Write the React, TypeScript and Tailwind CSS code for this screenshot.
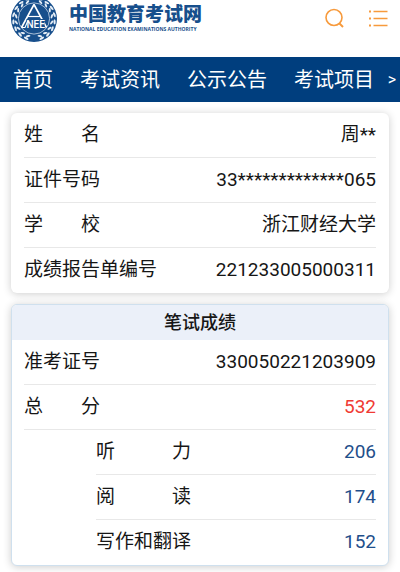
import clsx from "clsx";

type Row = {
  label: string;
  value: string;
  tone?: "red" | "blue";
  nested?: boolean;
};

const navItems = ["首页", "考试资讯", "公示公告", "考试项目"];

const profileRows: Row[] = [
  { label: "姓　　名", value: "周**" },
  { label: "证件号码", value: "33*************065" },
  { label: "学　　校", value: "浙江财经大学" },
  { label: "成绩报告单编号", value: "221233005000311" },
];

const scoreRows: Row[] = [
  { label: "准考证号", value: "330050221203909" },
  { label: "总　　分", value: "532", tone: "red" },
  { label: "听　　　力", value: "206", tone: "blue", nested: true },
  { label: "阅　　　读", value: "174", tone: "blue", nested: true },
  { label: "写作和翻译", value: "152", tone: "blue", nested: true },
];

// angles of the laurel leaves, one side; the other side is mirrored
const leafAngles = [18, 38, 58, 78, 98, 118, 138, 158];

function Emblem() {
  return (
    <svg viewBox="0 4 46 42" className="h-[42px] w-[46px] shrink-0" role="img" aria-label="NEEA">
      <circle cx="23" cy="23" r="23" fill="#174f8c" />
      {[1, -1].map((side) => (
        <g key={side} transform={`translate(23 23) scale(${side} 1)`} fill="#e6eef6">
          {leafAngles.map((angle) => (
            <g key={angle} transform={`rotate(${angle})`}>
              <ellipse cx="0" cy="-20.8" rx="2.6" ry="1.1" transform="rotate(-10 0 -20.8)" />
              <ellipse cx="1" cy="-18" rx="2.3" ry="1" transform="rotate(30 1 -18)" />
            </g>
          ))}
        </g>
      ))}
      <circle cx="23" cy="22.5" r="15.6" fill="#174f8c" stroke="#e6eef6" strokeWidth="0.7" />
      <path d="M23 8.5 10.5 31.5M23 8.5l12.5 23" fill="none" stroke="#fff" strokeWidth="1.6" />
      <path d="M17 20.5h12" stroke="#fff" strokeWidth="1.2" />
      <path d="M15.5 23h18v9.5h-18Z" fill="#174f8c" />
      <path d="M10.5 31.5h3.5l3-7" fill="none" stroke="#fff" strokeWidth="1.1" />
      <text x="15.5" y="31.5" fill="#fff" fontSize="10" fontWeight="500" fontFamily="Roboto, sans-serif">
        NEE
      </text>
    </svg>
  );
}

function Header() {
  return (
    <header className="flex h-[57px] items-start justify-between pr-3 pl-[11px]">
      <a href="#" className="flex items-start gap-3 text-[#174f8c]">
        <Emblem />
        <span className="flex flex-col pt-1">
          <span className="text-[19px] leading-[22px] font-black whitespace-nowrap">中国教育考试网</span>
          <span className="font-['Open_Sans',sans-serif] text-[5px] leading-[7px] font-bold whitespace-nowrap">
            NATIONAL EDUCATION EXAMINATIONS AUTHORITY
          </span>
        </span>
      </a>
      <div className="flex gap-6 pt-2 text-[#f79a3c]">
        <button type="button" aria-label="搜索">
          <svg viewBox="0 0 20 20" className="size-5" fill="none" stroke="currentColor" strokeWidth="1.6">
            <circle cx="10" cy="9.5" r="8" />
            <path d="m15.5 15.5 3.5 3.5" strokeWidth="2" />
          </svg>
        </button>
        <button type="button" aria-label="菜单">
          <svg viewBox="0 0 20 20" className="size-5" fill="none" stroke="currentColor" strokeWidth="1.5">
            <path d="M5.5 3.5h14M5.5 10.5h14M5.5 17.5h14" />
            <path d="M1 3.5h2M1 10.5h2M1 17.5h2" strokeWidth="2" />
          </svg>
        </button>
      </div>
    </header>
  );
}

function InfoRow({ label, value, tone, nested }: Row) {
  return (
    <div
      className={clsx(
        "flex h-[45px] items-center justify-between border-b border-[#e8e8e8] last:border-b-0",
        nested && "ml-[72px]"
      )}
    >
      <dt>{label}</dt>
      <dd className={clsx(tone === "red" && "text-[#f03a34]", tone === "blue" && "text-[#1f4f8b]")}>
        {value}
      </dd>
    </div>
  );
}

export default function App() {
  return (
    <div className="overflow-hidden bg-white pb-2 font-[Roboto,'Noto_Sans_CJK_SC',sans-serif] text-[19px] text-[#161616]">
      <Header />

      <nav className="flex h-[45px] items-center justify-between bg-[#003e7e] pr-1 pl-[13px] text-[20px] text-white">
        <div className="flex gap-[27px]">
          {navItems.map((item) => (
            <a key={item} href="#" className="whitespace-nowrap">
              {item}
            </a>
          ))}
        </div>
        <button type="button" aria-label="更多" className="text-base leading-5">
          &gt;
        </button>
      </nav>

      <main className="flex flex-col gap-[11px] px-[11px] pt-[11px]">
        <section className="rounded-md bg-white px-[13px] shadow-[0_1px_8px_rgba(0,0,0,0.2)]">
          <dl>
            {profileRows.map((row) => (
              <InfoRow key={row.label} {...row} />
            ))}
          </dl>
        </section>

        <section className="overflow-hidden rounded-md border border-[#cfe0ee] bg-white shadow-[0_1px_8px_rgba(0,0,0,0.2)]">
          <h2 className="bg-[#ebf0f9] text-center text-[18px] leading-[35px] font-medium">笔试成绩</h2>
          <dl className="px-3">
            {scoreRows.map((row) => (
              <InfoRow key={row.label} {...row} />
            ))}
          </dl>
        </section>
      </main>
    </div>
  );
}
